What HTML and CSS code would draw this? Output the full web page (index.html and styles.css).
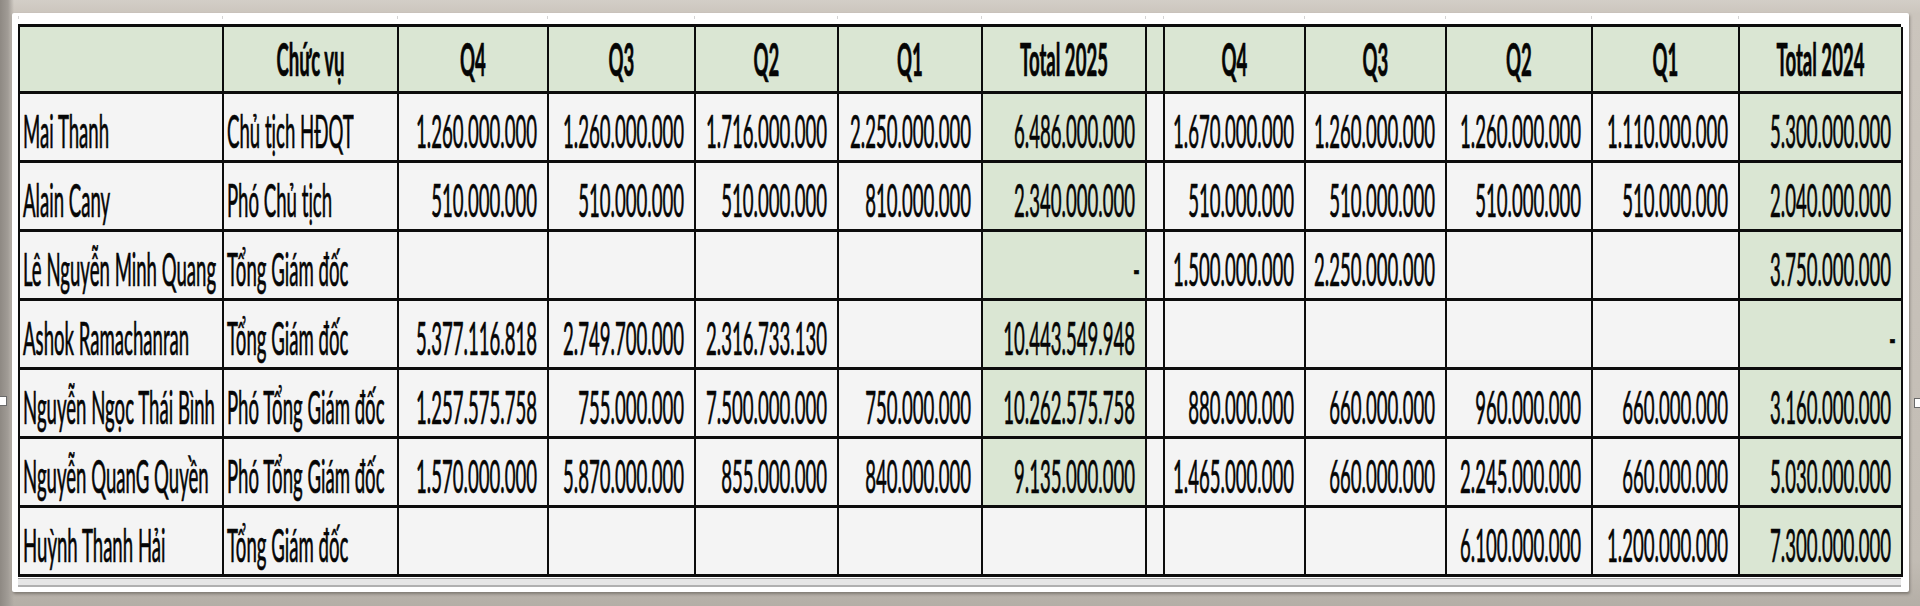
FILE: index.html
```html
<!DOCTYPE html>
<html lang="vi">
<head>
<meta charset="utf-8">
<title>Thù lao</title>
<link rel="stylesheet" href="styles.css">
</head>
<body>
<div class="stage">
  <div class="handle handle-left"></div>
  <div class="handle handle-right"></div>
  <div class="card">
    <div class="ruler">
      <span></span><span></span><span></span><span></span><span></span><span></span><span></span><span></span><span></span><span></span><span></span><span></span><span></span>
    </div>
    <div class="sheet">
      <div class="c h"></div>
      <div class="c h"><span class="t">Chức vụ</span></div>
      <div class="c h"><span class="t">Q4</span></div>
      <div class="c h"><span class="t">Q3</span></div>
      <div class="c h"><span class="t">Q2</span></div>
      <div class="c h"><span class="t">Q1</span></div>
      <div class="c h"><span class="t">Total 2025</span></div>
      <div class="c h"></div>
      <div class="c h"><span class="t">Q4</span></div>
      <div class="c h"><span class="t">Q3</span></div>
      <div class="c h"><span class="t">Q2</span></div>
      <div class="c h"><span class="t">Q1</span></div>
      <div class="c h"><span class="t">Total 2024</span></div>

      <div class="c l"><span class="t">Mai Thanh</span></div>
      <div class="c l"><span class="t">Chủ tịch HĐQT</span></div>
      <div class="c n"><span class="t">1.260.000.000</span></div>
      <div class="c n"><span class="t">1.260.000.000</span></div>
      <div class="c n"><span class="t">1.716.000.000</span></div>
      <div class="c n"><span class="t">2.250.000.000</span></div>
      <div class="c n g"><span class="t">6.486.000.000</span></div>
      <div class="c"></div>
      <div class="c n"><span class="t">1.670.000.000</span></div>
      <div class="c n"><span class="t">1.260.000.000</span></div>
      <div class="c n"><span class="t">1.260.000.000</span></div>
      <div class="c n"><span class="t">1.110.000.000</span></div>
      <div class="c n g"><span class="t">5.300.000.000</span></div>

      <div class="c l"><span class="t">Alain Cany</span></div>
      <div class="c l"><span class="t">Phó Chủ tịch</span></div>
      <div class="c n"><span class="t">510.000.000</span></div>
      <div class="c n"><span class="t">510.000.000</span></div>
      <div class="c n"><span class="t">510.000.000</span></div>
      <div class="c n"><span class="t">810.000.000</span></div>
      <div class="c n g"><span class="t">2.340.000.000</span></div>
      <div class="c"></div>
      <div class="c n"><span class="t">510.000.000</span></div>
      <div class="c n"><span class="t">510.000.000</span></div>
      <div class="c n"><span class="t">510.000.000</span></div>
      <div class="c n"><span class="t">510.000.000</span></div>
      <div class="c n g"><span class="t">2.040.000.000</span></div>

      <div class="c l"><span class="t">Lê Nguyễn Minh Quang</span></div>
      <div class="c l"><span class="t">Tổng Giám đốc</span></div>
      <div class="c n"></div>
      <div class="c n"></div>
      <div class="c n"></div>
      <div class="c n"></div>
      <div class="c n g dash"><span class="t">-</span></div>
      <div class="c"></div>
      <div class="c n"><span class="t">1.500.000.000</span></div>
      <div class="c n"><span class="t">2.250.000.000</span></div>
      <div class="c n"></div>
      <div class="c n"></div>
      <div class="c n g"><span class="t">3.750.000.000</span></div>

      <div class="c l"><span class="t">Ashok Ramachanran</span></div>
      <div class="c l"><span class="t">Tổng Giám đốc</span></div>
      <div class="c n"><span class="t">5.377.116.818</span></div>
      <div class="c n"><span class="t">2.749.700.000</span></div>
      <div class="c n"><span class="t">2.316.733.130</span></div>
      <div class="c n"></div>
      <div class="c n g"><span class="t">10.443.549.948</span></div>
      <div class="c"></div>
      <div class="c n"></div>
      <div class="c n"></div>
      <div class="c n"></div>
      <div class="c n"></div>
      <div class="c n g dash"><span class="t">-</span></div>

      <div class="c l"><span class="t">Nguyễn Ngọc Thái Bình</span></div>
      <div class="c l"><span class="t">Phó Tổng Giám đốc</span></div>
      <div class="c n"><span class="t">1.257.575.758</span></div>
      <div class="c n"><span class="t">755.000.000</span></div>
      <div class="c n"><span class="t">7.500.000.000</span></div>
      <div class="c n"><span class="t">750.000.000</span></div>
      <div class="c n g"><span class="t">10.262.575.758</span></div>
      <div class="c"></div>
      <div class="c n"><span class="t">880.000.000</span></div>
      <div class="c n"><span class="t">660.000.000</span></div>
      <div class="c n"><span class="t">960.000.000</span></div>
      <div class="c n"><span class="t">660.000.000</span></div>
      <div class="c n g"><span class="t">3.160.000.000</span></div>

      <div class="c l"><span class="t">Nguyễn QuanG Quyền</span></div>
      <div class="c l"><span class="t">Phó Tổng Giám đốc</span></div>
      <div class="c n"><span class="t">1.570.000.000</span></div>
      <div class="c n"><span class="t">5.870.000.000</span></div>
      <div class="c n"><span class="t">855.000.000</span></div>
      <div class="c n"><span class="t">840.000.000</span></div>
      <div class="c n g"><span class="t">9.135.000.000</span></div>
      <div class="c"></div>
      <div class="c n"><span class="t">1.465.000.000</span></div>
      <div class="c n"><span class="t">660.000.000</span></div>
      <div class="c n"><span class="t">2.245.000.000</span></div>
      <div class="c n"><span class="t">660.000.000</span></div>
      <div class="c n g"><span class="t">5.030.000.000</span></div>

      <div class="c l"><span class="t">Huỳnh Thanh Hải</span></div>
      <div class="c l"><span class="t">Tổng Giám đốc</span></div>
      <div class="c n"></div>
      <div class="c n"></div>
      <div class="c n"></div>
      <div class="c n"></div>
      <div class="c n"></div>
      <div class="c"></div>
      <div class="c n"></div>
      <div class="c n"></div>
      <div class="c n"><span class="t">6.100.000.000</span></div>
      <div class="c n"><span class="t">1.200.000.000</span></div>
      <div class="c n g"><span class="t">7.300.000.000</span></div>
    </div>
    <div class="under"></div>
  </div>
</div>
</body>
</html>
```

FILE: styles.css
```css
* { box-sizing: border-box; }

html, body {
  margin: 0;
  padding: 0;
  width: 1920px;
  height: 606px;
  overflow: hidden;
}

body {
  font-family: Lato, "Open Sans", "Liberation Sans", sans-serif;
  color: #050505;
  background:
    linear-gradient(to right, #8e8983 0px, #a19c96 8px, rgba(200,195,188,0) 14px),
    linear-gradient(to bottom, #d3cec7 0px, #cbc5bd 14px, #c2bcb4 560px, #b4aea6 606px);
}

.stage {
  position: relative;
  width: 1920px;
  height: 606px;
  padding: 13px 0 0 12px;
}

.handle {
  position: absolute;
  width: 8px;
  height: 10px;
  background: #ffffff;
  border: 1px solid #6a6a6a;
}
.handle-left { left: -1px; top: 396px; }
.handle-right { left: 1914px; top: 398px; }

.card {
  width: 1897px;
  height: 579px;
  background: #ffffff;
  padding: 0 0 0 6px;
  box-shadow: 1px 2px 3px rgba(60,55,50,0.45);
  border-radius: 2px;
}

.ruler {
  display: grid;
  grid-template-columns: 204px 175px 150px 147px 143px 144px 164px 18px 141px 141px 146px 147px 163px;
  width: 1883px;
  height: 11px;
}
.ruler span {
  border-left: 1px solid transparent;
  position: relative;
}
.ruler span::before {
  content: "";
  position: absolute;
  left: -1px;
  top: 3px;
  width: 1px;
  height: 3px;
  background: #d4d4d4;
}

.sheet {
  display: grid;
  grid-template-columns: 204px 175px 150px 147px 143px 144px 164px 18px 141px 141px 146px 147px 163px;
  grid-template-rows: 67px repeat(7, 69px);
  width: 1883px;
  border-top: 3px solid #0c0c0c;
  border-left: 2px solid #0c0c0c;
}

.c {
  display: flex;
  align-items: center;
  background: #f4f4f4;
  border-right: 2px solid #0c0c0c;
  border-bottom: 3px solid #0c0c0c;
  white-space: nowrap;
  overflow: visible;
  font-size: 18.6px;
  padding-top: 8px;
}

.h {
  background: #dae6d3;
  justify-content: center;
  font-weight: 700;
  padding-top: 1px;
}

.l {
  justify-content: flex-start;
  padding-left: 3px;
}

.n {
  justify-content: flex-end;
  padding-right: 10px;
}

.g { background: #dae6d3; }

.dash { padding-right: 5px; }

.t {
  display: inline-block;
  transform: scaleY(2.45);
  transform-origin: 50% 50%;
  line-height: 1;
  -webkit-text-stroke: 0.3px #050505;
}

.under {
  width: 1883px;
  height: 9px;
  margin-top: 1px;
  background: #e6e6e6;
  border-top: 1px solid #9a9a9a;
  border-bottom: 2px solid #b0b0b0;
}
```
